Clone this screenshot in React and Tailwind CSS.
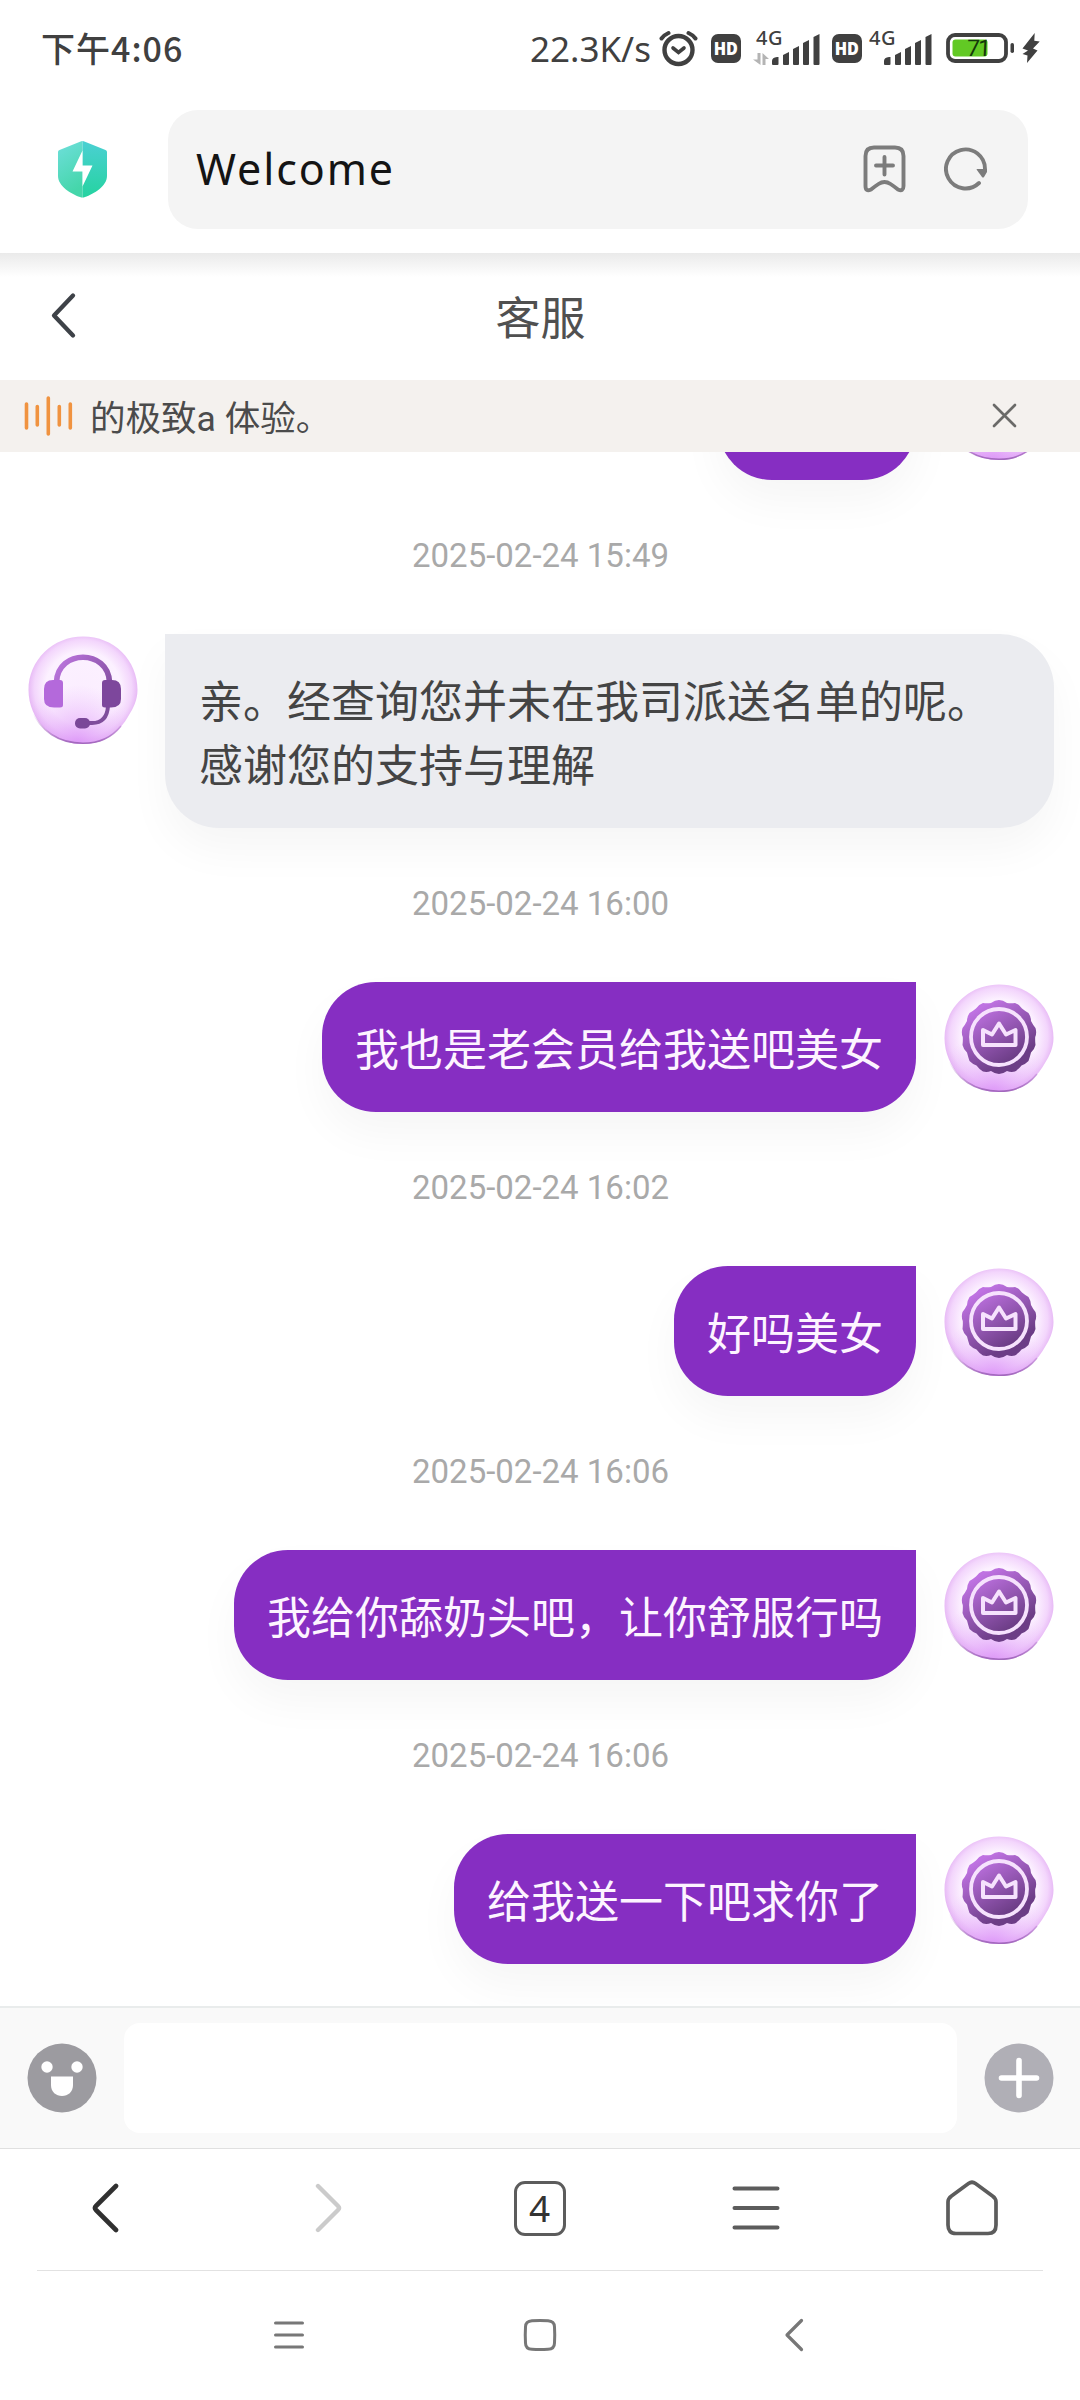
const HdBadge = ({ className }) => (
  <div className={`flex h-[29px] w-[30px] shrink-0 items-center justify-center rounded-[7px] bg-[#404040] font-['Open_Sans','Noto_Sans',sans-serif] text-[17px] leading-none font-extrabold text-white ${className}`}>
    <span className="scale-x-95">HD</span>
  </div>
);

const Bars = () => (
  <svg width="48" height="32" viewBox="0 0 48 32" fill="#404040">
    <path d="M0 31V28Q0 24.500 5 24H6.500V31Q6.500 32 5.500 32H1Q0 32 0 31Z" />
    <path d="M11 31V22L17 19V31Q17 32 16 32H12Q11 32 11 31Z" />
    <path d="M21 31V16L27 13V31Q27 32 26 32H22Q21 32 21 31Z" />
    <path d="M31 31V10L37 7V31Q37 32 36 32H32Q31 32 31 31Z" />
    <path d="M41.500 31V4L47.500 1V31Q47.500 32 46.500 32H42.500Q41.500 32 41.500 31Z" />
  </svg>
);

const Signal = ({ data, className }) => (
  <div className={`relative flex h-[36px] shrink-0 items-end justify-end ${className}`}>
    <span className={`absolute top-[-1px] font-['Noto_Sans',sans-serif] text-[20px] leading-[20px] font-medium tracking-[0.500px] text-[#404040] ${data ? "left-[3px]" : "left-0"}`}>
      4G
    </span>
    {data && (
      <svg className="absolute bottom-0 left-0" width="17" height="12" viewBox="0 0 17 12" fill="#b4b4b4">
        <path d="M4.500 0H7.500V12L0 6.500H4.500Z" />
        <path d="M9.500 0L16 6H12.500V12H9.500Z" />
      </svg>
    )}
    <Bars />
  </div>
);

const StatusBar = () => (
  <div className="flex h-[96px] items-center justify-between pr-[40px] pl-[41px] text-[#404040]">
    <span className="font-['Noto_Sans_CJK_SC',sans-serif] text-[34px] leading-none font-medium tracking-[1px]">下午4:06</span>
    <div className="flex items-center">
      <span className="mr-[9px] w-[120px] font-['Noto_Sans',sans-serif] text-[35px] leading-none font-normal whitespace-nowrap">22.3K/s</span>
      <svg className="mr-[13px]" width="39" height="37" viewBox="0 0 39 37" fill="none" stroke="#404040" strokeLinecap="round">
        <circle cx="19.500" cy="20" r="14" strokeWidth="4.400" />
        <path d="M2.500 8.500Q5 5 9.500 3M36.500 8.500Q34 5 29.500 3" strokeWidth="4" />
        <path d="M14 18L19.500 22.500L25 18" strokeWidth="3.600" />
      </svg>
      <HdBadge className="mr-[12px]" />
      <Signal data className="mr-[12px] mb-[2px] w-[67px]" />
      <HdBadge className="mr-[7px]" />
      <Signal className="mr-[14px] mb-[2px] w-[63px]" />
      <div className="relative mr-[8px] h-[30px] w-[68px]">
        <svg width="68" height="30" viewBox="0 0 68 30">
          <rect x="2" y="2" width="58" height="26" rx="7" fill="none" stroke="#404040" strokeWidth="3.800" />
          <rect x="6.500" y="6.500" width="35" height="17" rx="3" fill="#62c924" />
          <rect x="64.500" y="10" width="3.500" height="10" rx="1.700" fill="#404040" />
        </svg>
        <span className="absolute top-[5px] left-[21px] -skew-x-3 font-['Roboto',sans-serif] text-[23px] leading-[21px] font-normal tracking-[-2px] text-[#14380a]">71</span>
      </div>
      <svg width="18" height="31" viewBox="0 0 18 31" fill="#404040">
        <path d="M12.700 0L.5 15.500L6 17.500L.5 21L5.500 22.500L5 30L15.500 17.500L11 15.500L17.700 8.500L12.300 7.700Z" />
      </svg>
    </div>
  </div>
);

const AddressBar = () => (
  <div className="flex h-[157px] pt-[14px] pl-[57px]">
    <svg className="mt-[31px]" width="51" height="57" viewBox="0 0 51 57">
      <defs>
        <linearGradient id="shieldL" x1="0" y1="0" x2="0.300" y2="1">
          <stop offset="0" stopColor="#6fdfdc" />
          <stop offset="1" stopColor="#45d6aa" />
        </linearGradient>
        <linearGradient id="shieldR" x1="0" y1="0" x2="0" y2="1">
          <stop offset="0" stopColor="#4bd0d3" />
          <stop offset="1" stopColor="#25d3a0" />
        </linearGradient>
      </defs>
      <path d="M25.500 0Q24.500 0 23 .8L2.500 9Q1 9.500 1 11V35C1 45 14 53 23 56Q24.500 56.500 25.500 56.500Z" fill="url(#shieldL)" />
      <path d="M25.500 0Q26.500 0 28 .8L48.500 9Q50 9.500 50 11V35C50 45 37 53 28 56Q26.500 56.500 25.500 56.500Z" fill="url(#shieldR)" />
      <path d="M25.500 9.500L15.500 30.500H25.500V45.500L35.500 24.500H25.500Z" fill="#fff" />
    </svg>
    <div className="ml-[60px] flex h-[119px] w-[860px] items-center rounded-[30px] bg-[#f4f4f4] pr-[40px] pb-[2px] pl-[28px]">
      <span className="flex-1 font-['Noto_Sans',sans-serif] text-[43px] leading-none tracking-[1.900px] text-[#141414]">Welcome</span>
      <svg className="mr-[38px]" width="43" height="48" viewBox="0 0 43 48" fill="none" stroke="#7c7c7c" strokeWidth="3.900" strokeLinecap="round" strokeLinejoin="round">
        <path d="M2.500 11Q2.500 2.500 11 2.500H32Q40.500 2.500 40.500 11V41Q40.500 47 35 44.500Q32 42 27.500 39Q21.500 35 15.500 39Q11 42 8 44.500Q2.500 47 2.500 41Z" />
        <path d="M13 20.500H30M21.500 12V29.500" />
      </svg>
      <svg width="44" height="44" viewBox="0 0 44 44" fill="none" stroke="#7c7c7c" strokeWidth="3.900" strokeLinecap="round">
        <path d="M35 36A19.500 19.500 0 1 1 41 22" />
        <path d="M33 22H43V25L40 30Q39 31 38 30L32.500 22.500Z" fill="#7c7c7c" stroke="none" />
      </svg>
    </div>
  </div>
);

const AvatarBase = ({ id, children }) => (
  <svg className="mt-[2px] shrink-0" width="110" height="109" viewBox="0 0 110 109">
    <defs>
      <radialGradient id={`${id}bg`} cx="0.500" cy="0.480" r="0.520">
        <stop offset="0" stopColor="#fbeeff" />
        <stop offset="0.660" stopColor="#fcf1ff" />
        <stop offset="0.860" stopColor="#f3d6fc" />
        <stop offset="1" stopColor="#e3b0f3" />
      </radialGradient>
      <radialGradient id={`${id}glow`} cx="0.450" cy="1" r="0.550">
        <stop offset="0" stopColor="#dc94f8" stopOpacity="0.850" />
        <stop offset="1" stopColor="#e9b8fb" stopOpacity="0" />
      </radialGradient>
      <linearGradient id={`${id}edge`} x1="0" y1="0" x2="0" y2="1">
        <stop offset="0.100" stopColor="#b070c8" stopOpacity="0" />
        <stop offset="1" stopColor="#a268bd" />
      </linearGradient>
      <linearGradient id={`${id}ink`} x1="0.200" y1="0" x2="0.800" y2="1">
        <stop offset="0.100" stopColor="#bf72e2" />
        <stop offset="0.800" stopColor="#6c3d86" />
      </linearGradient>
    </defs>
    <path d="M55 .5C86 .5 109.500 24 109.500 54C109.500 64 105 73 101 79C91 97 76 108 55 108C25 108 .5 84 .5 54C.5 24 25 .5 55 .5Z" fill={`url(#${id}bg)`} />
    <path d="M55 .5C86 .5 109.500 24 109.500 54C109.500 64 105 73 101 79C91 97 76 108 55 108C25 108 .5 84 .5 54C.5 24 25 .5 55 .5Z" fill={`url(#${id}glow)`} />
    <path d="M4 74C12 95 31 107.300 55 107.300C72 107.300 85 100 93 90" fill="none" stroke={`url(#${id}edge)`} strokeWidth="1.600" />
    {children}
  </svg>
);

const AgentAvatar = () => (
  <AvatarBase id="ag">
    <defs>
      <linearGradient id="agband" gradientUnits="userSpaceOnUse" x1="20" y1="20" x2="92" y2="70">
        <stop offset="0" stopColor="#c57be8" />
        <stop offset="1" stopColor="#74458f" />
      </linearGradient>
    </defs>
    <path d="M28.500 46C30 13 80 13 81.500 46" fill="none" stroke="url(#agband)" strokeWidth="5.600" />
    <path d="M80 70Q79 87 64 87H56" fill="none" stroke="#7f4d9c" strokeWidth="4" />
    <rect x="47" y="82" width="15" height="10.500" rx="5" fill="#7a4798" />
    <path d="M25 44H32Q35 44 35 47V69Q35 71.500 32 71.500H26Q16 71.500 16 63V53Q16 44 25 44Z" fill="#b469db" />
    <path d="M77 44H84Q93 44 93 53V63Q93 71.500 83 71.500H77Q74 71.500 74 69V47Q74 44 77 44Z" fill="#7d479c" />
  </AvatarBase>
);

const SEAL =
  "M55 16Q59 16 63 19Q67 19.500 71 19Q75.500 20.500 78 24.500Q81 27 84.500 29Q87 33 87 37Q89 41 91.500 44Q93 49 91.200 53Q91 57 91.500 61Q90.500 65.500 87 68.500Q86 72.500 84.500 77Q81 80.500 77.500 81.500Q75 85 71 87.500Q67 88.500 63 87Q59 90 55 90Q51 90 47 87Q43 88.500 39 87.500Q35 85 32.500 81.500Q29 80.500 25.500 77Q24 72.500 23 68.500Q19.500 65.500 18.500 61Q19 57 18.800 53Q17 49 18.500 44Q21 41 23 37Q23 33 25.500 29Q29 27 32 24.500Q34.500 20.500 39 19Q43 19.500 47 19Q51 16 55 16Z";

const MemberAvatar = ({ id }) => (
  <AvatarBase id={id}>
    <path d={SEAL} fill={`url(#${id}ink)`} />
    <circle cx="55" cy="53" r="28" fill="none" stroke="#f6e2fd" strokeWidth="3.800" />
    <path d="M39 46L48 50.500L55 39.500L62 50.500L71.500 46V61H39Z" fill="none" stroke="#f6e2fd" strokeWidth="4" strokeLinejoin="round" />
  </AvatarBase>
);

const Time = ({ children }) => (
  <div className="flex h-[154px] shrink-0 items-center justify-center pb-[4px] pl-[1px] font-['Roboto',sans-serif] text-[33px] leading-none text-[#a9a9a9]">{children}</div>
);

const Sent = ({ id, children }) => (
  <div className="flex h-[130px] shrink-0 items-start justify-end pr-[26px]">
    <div className="mr-[28px] h-[130px] rounded-[54px] rounded-tr-none bg-[#862ec2] px-[33px] py-[32px] text-[44px] leading-[66px] whitespace-nowrap text-[#fdf4ff] shadow-[0_22px_44px_rgba(0,0,0,0.04)]">
      {children}
    </div>
    <MemberAvatar id={id} />
  </div>
);

const MESSAGES = [
  { id: "m1", time: "2025-02-24 16:00", text: "我也是老会员给我送吧美女" },
  { id: "m2", time: "2025-02-24 16:02", text: "好吗美女" },
  { id: "m3", time: "2025-02-24 16:06", text: "我给你舔奶头吧，让你舒服行吗" },
  { id: "m4", time: "2025-02-24 16:06", text: "给我送一下吧求你了" },
];

const Chat = () => (
  <div className="flex h-[1554px] flex-col justify-end overflow-hidden bg-white pb-[42px]">
    <Sent id="m0">
      <div className="w-[132px]" />
    </Sent>
    <Time>2025-02-24 15:49</Time>
    <div className="flex shrink-0 items-start pl-[28px]">
      <AgentAvatar />
      <div className="ml-[27px] h-[194px] w-[889px] rounded-[54px] rounded-tl-none bg-[#ebecf0] px-[34px] pt-[33px] text-[44px] leading-[64px] text-[#444] shadow-[0_22px_44px_rgba(0,0,0,0.04)]">
        亲。经查询您并未在我司派送名单的呢。
        <br />
        感谢您的支持与理解
      </div>
    </div>
    {MESSAGES.map((m) => (
      <div key={m.id} className="shrink-0">
        <Time>{m.time}</Time>
        <Sent id={m.id}>{m.text}</Sent>
      </div>
    ))}
  </div>
);

const InputBar = () => (
  <div className="flex h-[143px] items-center border-t-2 border-b border-t-[#e9ecec] border-b-[#e0e0e0] bg-[#f9f9f9] pr-[26px] pb-[1px] pl-[27px]">
    <svg width="70" height="72" viewBox="0 0 70 72">
      <ellipse cx="35" cy="36" rx="34.500" ry="34.500" fill="#9c9ba0" />
      <circle cx="20" cy="25" r="5.700" fill="#fff" />
      <circle cx="50" cy="25" r="5.700" fill="#fff" />
      <path d="M24 34.500H46V43C46 50 41 54 35 54S24 50 24 43Z" fill="#fff" />
    </svg>
    <div className="ml-[27px] h-[110px] w-[833px] rounded-[16px] bg-white" />
    <svg className="ml-[27px]" width="70" height="72" viewBox="0 0 70 72">
      <ellipse cx="35" cy="36" rx="34.500" ry="34.500" fill="#b0afb6" />
      <path d="M17.500 36H52.500M35 18.500V53.500" stroke="#fff" strokeWidth="5.600" strokeLinecap="round" />
    </svg>
  </div>
);

const BrowserNav = () => (
  <div className="flex h-[121px] items-center pb-[3px]">
    <div className="flex w-[212px] justify-center">
      <svg width="28" height="52" viewBox="0 0 28 52" fill="none" stroke="#303030" strokeWidth="4.600" strokeLinecap="round">
        <path d="M24 4L4 24Q2 26 4 28L24 48" />
      </svg>
    </div>
    <div className="flex w-[231px] justify-center">
      <svg width="28" height="52" viewBox="0 0 28 52" fill="none" stroke="#cbcbcb" strokeWidth="4.400" strokeLinecap="round">
        <path d="M4 4L24 24Q26 26 24 28L4 48" />
      </svg>
    </div>
    <div className="flex w-[193px] justify-center">
      <div className="flex h-[55px] w-[52px] items-center justify-center rounded-[11px] border-[3.500px] border-[#5c5c5c] pb-[2px] font-['Noto_Sans',sans-serif] text-[37px] leading-none text-[#333]">4</div>
    </div>
    <div className="flex w-[240px] justify-center">
      <svg width="48" height="46" viewBox="0 0 48 46" stroke="#5c5c5c" strokeWidth="4" strokeLinecap="round">
        <path d="M2.500 3.500H45.500M2.500 23H45.500M2.500 42.500H45.500" />
      </svg>
    </div>
    <div className="flex w-[192px] justify-center">
      <svg width="52" height="56" viewBox="0 0 52 56" fill="none" stroke="#5c5c5c" strokeWidth="3.700" strokeLinejoin="round">
        <path d="M22.500 3.500Q26 1 29.500 3.500L46.500 16Q50 18.500 50 22V45Q50 53.500 42 53.500H10Q2 53.500 2 45V22Q2 18.500 5.500 16Z" />
      </svg>
    </div>
  </div>
);

const SystemNav = () => (
  <div className="mx-[37px] flex h-[130px] items-center border-t border-[#e2e2e2] pb-[2px] text-[#777]">
    <svg className="ml-[236px]" width="32" height="32" viewBox="0 0 32 32" stroke="#777" strokeWidth="3" strokeLinecap="round">
      <path d="M2.500 4H29.500M2.500 16H29.500M2.500 28H29.500" />
    </svg>
    <svg className="ml-[218px]" width="34" height="34" viewBox="0 0 34 34" fill="none" stroke="#777" strokeWidth="3">
      <path d="M2.500 9Q2.500 3 9 2.700Q17 2.200 25 2.700Q31.500 3 31.500 9Q32 17 31.500 25Q31.500 31 25 31.300Q17 31.800 9 31.300Q2.500 31 2.500 25Q2 17 2.500 9Z" />
    </svg>
    <svg className="ml-[227px]" width="20" height="34" viewBox="0 0 20 34" fill="none" stroke="#777" strokeWidth="3.200" strokeLinecap="round" strokeLinejoin="round">
      <path d="M17.500 2.500L3 17L17.500 31.500" />
    </svg>
  </div>
);

export default function App() {
  return (
    <div className="h-[2400px] w-[1080px] overflow-hidden bg-white font-['Noto_Sans_CJK_SC',sans-serif]">
      <StatusBar />
      <AddressBar />
      <div className="flex h-[127px] items-center bg-linear-to-b from-[#eaeaea] to-white to-[24px] pb-[2px] pl-[50px]">
        <svg className="mb-[2px]" width="28" height="48" viewBox="0 0 28 48" fill="none" stroke="#3e4248" strokeWidth="4.300" strokeLinecap="round" strokeLinejoin="round">
          <path d="M23 4.500L4 24.500L23 44.500" />
        </svg>
        <h1 className="flex-1 pr-[77px] text-center text-[45px] leading-none font-normal text-[#505050]">客服</h1>
      </div>
      <div className="flex h-[72px] items-center bg-[#f4f1ee] pr-[63px] pl-[24px]">
        <svg width="50" height="40" viewBox="0 0 50 40" stroke="#f09340" strokeWidth="3.600" strokeLinecap="round">
          <path d="M2.500 8V32M13.300 10.500V29M24.300 2V38M35.300 10.500V29M46.300 8V32" />
        </svg>
        <p className="ml-[16px] flex-1 pt-[3px] text-[35.500px] leading-none text-[#4b4b4b]">
          <span>的极致</span>
          <span className="font-['Roboto',sans-serif]">a </span>
          <span>体验。</span>
        </p>
        <svg className="mb-[1px]" width="25" height="25" viewBox="0 0 25 25" stroke="#6a6a68" strokeWidth="2.700" strokeLinecap="round">
          <path d="M2 2L23 23M23 2L2 23" />
        </svg>
      </div>
      <Chat />
      <InputBar />
      <BrowserNav />
      <SystemNav />
    </div>
  );
}
